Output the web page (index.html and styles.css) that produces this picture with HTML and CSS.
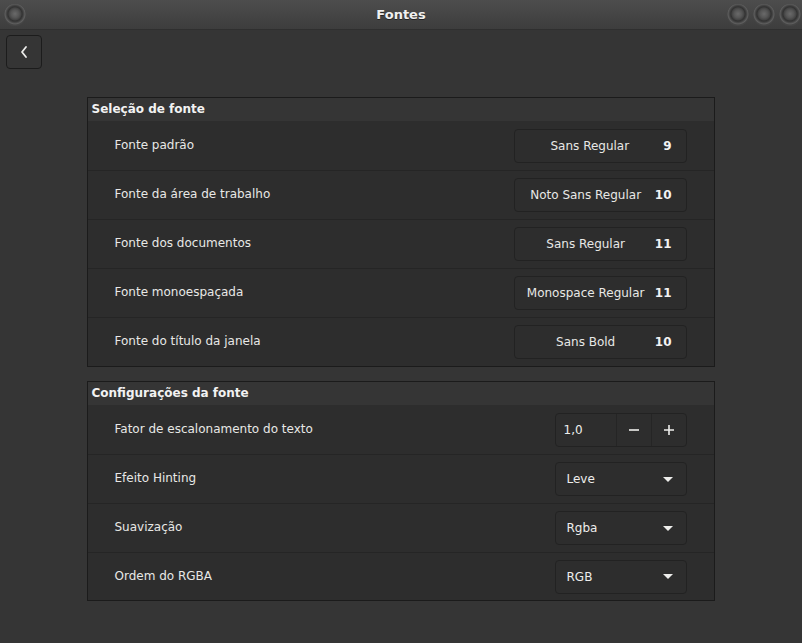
FILE: index.html
```html
<!DOCTYPE html>
<html lang="pt">
<head>
<meta charset="utf-8">
<title>Fontes</title>
<link rel="stylesheet" href="styles.css">
</head>
<body>
<div class="window">
  <header class="titlebar">
    <span class="dot dot-left"></span>
    <span class="title">Fontes</span>
    <div class="dots">
      <span class="dot"></span><span class="dot"></span><span class="dot"></span>
    </div>
  </header>
  <main class="content">
    <button class="back" aria-label="Voltar">
      <svg width="10" height="14" viewBox="0 0 10 14"><path d="M7 2 L3 7 L7 12" fill="none" stroke="#eeeeec" stroke-width="1.8" stroke-linecap="round" stroke-linejoin="round"/></svg>
    </button>
    <section class="card">
      <div class="card-head">Seleção de fonte</div>
      <div class="row"><span class="label">Fonte padrão</span><div class="fontbtn"><span class="fname">Sans Regular</span><span class="fsize">9</span></div></div>
      <div class="row"><span class="label">Fonte da área de trabalho</span><div class="fontbtn"><span class="fname">Noto Sans Regular</span><span class="fsize">10</span></div></div>
      <div class="row"><span class="label">Fonte dos documentos</span><div class="fontbtn"><span class="fname">Sans Regular</span><span class="fsize">11</span></div></div>
      <div class="row"><span class="label">Fonte monoespaçada</span><div class="fontbtn"><span class="fname">Monospace Regular</span><span class="fsize">11</span></div></div>
      <div class="row"><span class="label">Fonte do título da janela</span><div class="fontbtn"><span class="fname">Sans Bold</span><span class="fsize">10</span></div></div>
    </section>
    <section class="card card2">
      <div class="card-head">Configurações da fonte</div>
      <div class="row"><span class="label">Fator de escalonamento do texto</span>
        <div class="spin"><span class="spin-val">1,0</span><span class="spin-btn">
          <svg width="12" height="12" viewBox="0 0 12 12"><path d="M1 6 H11" stroke="#eeeeec" stroke-width="1.6"/></svg></span><span class="spin-btn">
          <svg width="12" height="12" viewBox="0 0 12 12"><path d="M1 6 H11 M6 1 V11" stroke="#eeeeec" stroke-width="1.6"/></svg></span></div>
      </div>
      <div class="row"><span class="label">Efeito Hinting</span><div class="combo"><span>Leve</span><span class="arrow"></span></div></div>
      <div class="row"><span class="label">Suavização</span><div class="combo"><span>Rgba</span><span class="arrow"></span></div></div>
      <div class="row"><span class="label">Ordem do RGBA</span><div class="combo"><span>RGB</span><span class="arrow"></span></div></div>
    </section>
  </main>
</div>
</body>
</html>
```
FILE: styles.css
```css
html, body {
  margin: 0;
  padding: 0;
  background: #353535;
}
body {
  font-family: "DejaVu Sans", sans-serif;
  font-size: 12px;
  color: #eeeeec;
  width: 802px;
  height: 643px;
  overflow: hidden;
}
.window {
  height: 643px;
  display: flex;
  flex-direction: column;
}
.titlebar {
  height: 30px;
  flex: none;
  box-sizing: border-box;
  background: linear-gradient(#4d4d4d, #3d3d3d);
  border-bottom: 1px solid #2f2f2f;
  display: flex;
  align-items: center;
  justify-content: space-between;
  padding: 0 1px 0 4px;
  position: relative;
}
.title {
  position: absolute;
  left: 0;
  right: 0;
  text-align: center;
  font-weight: bold;
  font-size: 13px;
  color: #f0f0f0;
  text-shadow: 0 1px 0 #222;
  pointer-events: none;
}
.dots {
  display: flex;
  gap: 4px;
}
.dot {
  width: 22px;
  height: 22px;
  box-sizing: border-box;
  border-radius: 50%;
  background: radial-gradient(circle at 50% 45%, #6a6a6a 0, #555 4px, #444 6px, #333 7px, #3c3c3c 8px, #5e5e5e 10px, #454545 11px);
  display: block;
}
.content {
  flex: 1;
  padding: 5px 6px;
  display: flex;
  flex-direction: column;
}
.back {
  width: 36px;
  height: 34px;
  box-sizing: border-box;
  background: #353535;
  border: 1px solid #1c1c1c;
  border-radius: 4px;
  display: flex;
  align-items: center;
  justify-content: center;
  padding: 0;
  margin: 0;
}
.card {
  width: 628px;
  box-sizing: border-box;
  align-self: center;
  margin-top: 28px;
  margin-left: -1px;
  border: 1px solid #1b1b1b;
  background: #2d2d2d;
}
.card2 {
  margin-top: 14px;
}
.card-head {
  height: 23px;
  box-sizing: border-box;
  background: #353535;
  font-weight: bold;
  font-size: 12px;
  color: #f2f2f2;
  padding: 4px 0 0 4px;
}
.row {
  height: 49px;
  box-sizing: border-box;
  display: flex;
  align-items: center;
  justify-content: space-between;
  padding: 0 27px;
  border-top: 1px solid #252525;
  white-space: nowrap;
}
.card-head + .row {
  border-top: none;
}
.card2 .row:last-child {
  height: 48px;
}
.label {
  font-size: 12px;
  color: #e8e8e6;
  margin-top: -2px;
}
.fontbtn {
  width: 173px;
  height: 34px;
  box-sizing: border-box;
  border: 1px solid #222;
  border-radius: 4px;
  background: #2d2d2d;
  display: flex;
  align-items: center;
  padding: 0 14px 0 10px;
  font-size: 12px;
}
.fname {
  flex: 1;
  text-align: center;
  color: #e8e8e6;
}
.fsize {
  font-weight: bold;
  margin-left: 8px;
  color: #f2f2f2;
}
.spin {
  width: 132px;
  height: 34px;
  box-sizing: border-box;
  border: 1px solid #222;
  border-radius: 4px;
  display: flex;
  align-items: stretch;
  font-size: 12px;
}
.spin-val {
  width: 60px;
  display: flex;
  align-items: center;
  padding-left: 8px;
  box-sizing: border-box;
}
.spin-btn {
  flex: 1;
  border-left: 1px solid #252525;
  display: flex;
  align-items: center;
  justify-content: center;
}
.combo {
  width: 132px;
  height: 34px;
  box-sizing: border-box;
  border: 1px solid #222;
  border-radius: 4px;
  display: flex;
  align-items: center;
  justify-content: space-between;
  padding: 0 13px 0 11px;
  font-size: 12px;
}
.arrow {
  width: 0;
  height: 0;
  border-left: 5px solid transparent;
  border-right: 5px solid transparent;
  border-top: 5px solid #eeeeec;
}
```
